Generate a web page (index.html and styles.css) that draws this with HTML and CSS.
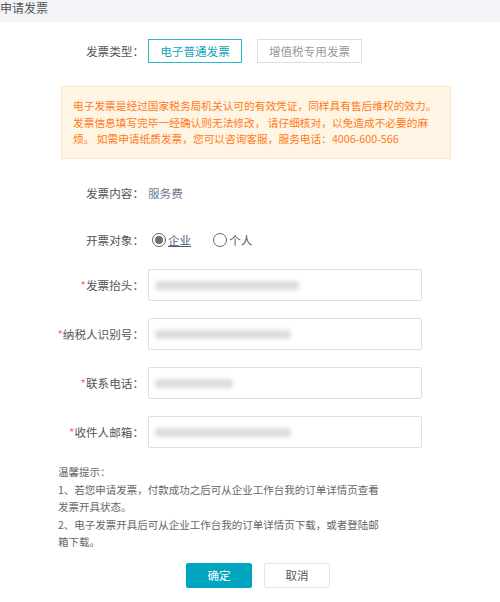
FILE: index.html
```html
<!DOCTYPE html>
<html lang="zh-CN">
<head>
    <meta charset="UTF-8">
    <meta name="viewport" content="width=device-width, initial-scale=1.0">
    <title>申请发票</title>
    <link rel="stylesheet" href="styles.css">
</head>
<body>
    <header class="page-header">申请发票</header>

    <div class="main">
        <!-- 发票类型 -->
        <div class="row type-row">
            <span class="label">发票类型：</span>
            <button class="type-btn active">电子普通发票</button>
            <button class="type-btn">增值税专用发票</button>
        </div>

        <div class="notice">
            电子发票是经过国家税务局机关认可的有效凭证，同样具有售后维权的效力。发票信息填写完毕一经确认则无法修改， 请仔细核对，以免造成不必要的麻烦。 如需申请纸质发票，您可以咨询客服，服务电话：4006-600-566
        </div>

        <div class="row content-row">
            <span class="label">发票内容：</span>
            <span class="value">服务费</span>
        </div>

        <div class="row target-row">
            <span class="label">开票对象：</span>
            <label class="radio checked"><span class="dot"></span><span class="radio-text underline">企业</span></label>
            <label class="radio"><span class="dot"></span><span class="radio-text">个人</span></label>
        </div>

        <!-- 表单 -->
        <div class="row field-row">
            <span class="label"><em>*</em>发票抬头：</span>
            <div class="input"><span class="blur" style="width: 144px"></span></div>
        </div>
        <div class="row field-row">
            <span class="label"><em>*</em>纳税人识别号：</span>
            <div class="input"><span class="blur" style="width: 136px"></span></div>
        </div>
        <div class="row field-row">
            <span class="label"><em>*</em>联系电话：</span>
            <div class="input"><span class="blur" style="width: 78px"></span></div>
        </div>
        <div class="row field-row">
            <span class="label"><em>*</em>收件人邮箱：</span>
            <div class="input"><span class="blur" style="width: 136px"></span></div>
        </div>

        <div class="tips">
            温馨提示：<br>
            1、若您申请发票，付款成功之后可从企业工作台我的订单详情页查看发票开具状态。<br>
            2、电子发票开具后可从企业工作台我的订单详情页下载，或者登陆邮箱下载。
        </div>

        <div class="actions">
            <button class="btn btn-primary">确定</button>
            <button class="btn btn-default">取消</button>
        </div>
    </div>
</body>
</html>
```

FILE: styles.css
```css
html, body {
    margin: 0;
    padding: 0;
    background: #fff;
    font-family: "Noto Sans CJK SC", "Noto Sans", sans-serif;
    color: #555;
}

.page-header {
    height: 22px;
    line-height: 16px;
    background: #f3f5f9;
    font-size: 12px;
    color: #555;
}

.main {
    padding-left: 45px;
}

.row {
    display: flex;
    align-items: center;
}

.label {
    width: 99px;
    margin-right: 4px;
    flex: none;
    text-align: right;
    white-space: nowrap;
    font-size: 11.6px;
    color: #555;
}

.label em {
    font-style: normal;
    color: #f56c6c;
}

.type-row {
    margin-top: 17px;
    height: 24px;
}

.type-btn {
    height: 24px;
    padding: 0;
    width: 105px;
    margin-right: 15px;
    background: #fff;
    border: 1px solid #ddd;
    font-family: inherit;
    font-size: 11.6px;
    color: #999;
    white-space: nowrap;
    box-sizing: border-box;
}

.type-btn.active {
    width: 94px;
    border-color: #2cb6cc;
    color: #16a3bd;
}

.notice {
    margin: 23px 0 0 16px;
    width: 390px;
    box-sizing: border-box;
    padding: 11px 8px 10px 11px;
    background: #fff5e4;
    border: 1px solid #fde6c6;
    font-size: 10.7px;
    line-height: 16.7px;
    color: #ff7a1a;
}

.content-row {
    margin-top: 24px;
    height: 20px;
}

.value {
    font-size: 11.6px;
    color: #6b7a8f;
}

.target-row {
    margin-top: 27px;
    height: 20px;
}

.radio {
    display: flex;
    align-items: center;
    margin-right: 18px;
    padding-left: 4px;
    font-size: 11.6px;
    color: #555;
}

.radio .dot {
    width: 12px;
    height: 12px;
    border: 1px solid #666;
    border-radius: 50%;
    margin-right: 2px;
    position: relative;
}

.radio.checked .dot::after {
    content: "";
    position: absolute;
    left: 2px;
    top: 2px;
    width: 8px;
    height: 8px;
    border-radius: 50%;
    background: #6e6e6e;
}

.radio-text.underline {
    color: #4c5c78;
    text-decoration: underline;
}

.field-row {
    margin-top: 17px;
}

.target-row + .field-row {
    margin-top: 19px;
}

.input {
    width: 274px;
    height: 32px;
    box-sizing: border-box;
    border: 1px solid #dcdfe6;
    border-radius: 2px;
    display: flex;
    align-items: center;
    padding-left: 6px;
}

.blur {
    height: 9px;
    background: #dcdcdc;
    border-radius: 4px;
    filter: blur(2px);
}

.tips {
    margin: 15px 0 0 13px;
    width: 325px;
    font-size: 10.5px;
    line-height: 17.5px;
    color: #666;
}

.actions {
    margin: 12px 0 0 141px;
    display: flex;
    gap: 12px;
}

.btn {
    width: 66px;
    height: 25px;
    border-radius: 2px;
    font-family: inherit;
    font-size: 11.5px;
    box-sizing: border-box;
    cursor: pointer;
}

.btn-primary {
    background: #00a6c0;
    border: 1px solid #00a6c0;
    color: #fff;
}

.btn-default {
    background: #fff;
    border: 1px solid #dfe4ee;
    color: #555;
}
```
